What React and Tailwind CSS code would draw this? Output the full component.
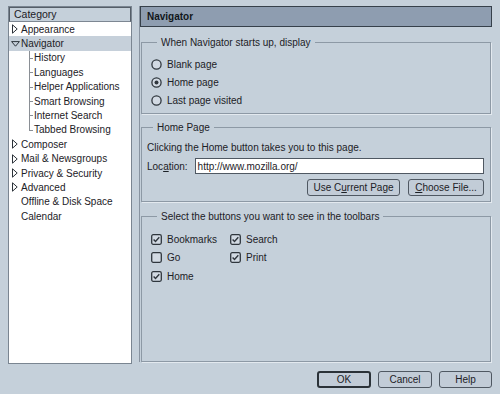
import React from "react";

const RightArrow = () => (
  <svg width="6" height="10" viewBox="0 0 6 10" className="shrink-0">
    <path d="M0.5 0.8 L5.2 5 L0.5 9.2 Z" fill="none" stroke="#2c333a" strokeWidth="1" />
  </svg>
);

const DownArrow = () => (
  <svg width="9" height="6" viewBox="0 0 9 6" className="shrink-0">
    <path d="M0.6 0.6 L8.4 0.6 L4.5 5.2 Z" fill="none" stroke="#2c333a" strokeWidth="1" />
  </svg>
);

const Radio = ({ checked }) => (
  <svg width="11" height="11" viewBox="0 0 11 11" className="shrink-0">
    <circle cx="5.5" cy="5.5" r="4.6" fill="#d2dae3" stroke="#2f363d" strokeWidth="1.3" />
    {checked && <circle cx="5.5" cy="5.5" r="2" fill="#2f363d" />}
  </svg>
);

const Check = ({ checked }) => (
  <svg width="11" height="11" viewBox="0 0 11 11" className="shrink-0">
    <rect x="0.7" y="0.7" width="9.6" height="9.6" rx="1.5" fill="#d2dae3" stroke="#2f363d" strokeWidth="1.3" />
    {checked && (
      <path d="M2.6 5.4 L4.5 7.4 L8.3 3.2" fill="none" stroke="#2f363d" strokeWidth="1.4" />
    )}
  </svg>
);

const Btn = ({ children, w, strong }) => (
  <div
    className={`h-[17px] ${w} flex items-center justify-center rounded-[3px] bg-[#c2ccd7] ${
      strong ? "border-2 border-[#2b3238]" : "border border-[#4f5862]"
    }`}
  >
    {children}
  </div>
);

const Group = ({ title, className, children }) => (
  <fieldset
    className={`border border-[#8d99a5] shadow-[1px_1px_0_#e3e9ef] ml-[1px] mr-[3px] ${className}`}
  >
    <legend className="ml-[6px] px-[4px] leading-[13px]">{title}</legend>
    {children}
  </fieldset>
);

const topItems = [
  { label: "Appearance", arrow: "right" },
  { label: "Navigator", arrow: "down", selected: true },
];
const children = [
  "History",
  "Languages",
  "Helper Applications",
  "Smart Browsing",
  "Internet Search",
  "Tabbed Browsing",
];
const bottomItems = [
  { label: "Composer", arrow: "right" },
  { label: "Mail & Newsgroups", arrow: "right" },
  { label: "Privacy & Security", arrow: "right" },
  { label: "Advanced", arrow: "right" },
  { label: "Offline & Disk Space" },
  { label: "Calendar" },
];

const TopRow = ({ item }) => (
  <div
    className={`h-[14.4px] flex items-center ${item.selected ? "bg-[#c6d0da]" : ""} ${
      item.arrow === "down" ? "pl-[2px] gap-[1px]" : "pl-[3px] gap-[3px]"
    }`}
  >
    {item.arrow === "right" && <RightArrow />}
    {item.arrow === "down" && <DownArrow />}
    {!item.arrow && <span className="w-[6px]" />}
    <span>{item.label}</span>
  </div>
);

const App = () => {
  return (
    <div className="w-[500px] h-[394px] bg-[#c5d0da] flex flex-col font-['Liberation_Sans',Arial,sans-serif] text-[10px] text-[#1c2126] overflow-hidden">
      <div className="flex pt-[6px] pl-[8px] gap-[7px]">
        {/* category tree */}
        <div className="w-[124px] h-[358px] bg-white border border-[#7a8591] flex flex-col">
          <div className="h-[15px] bg-[#c5d0da] border border-[#555e68] border-b-[#7d8792] flex items-center pl-[4px] text-[10.5px]">
            Category
          </div>
          {topItems.map((item) => (
            <TopRow key={item.label} item={item} />
          ))}
          {children.map((c, i) => (
            <div key={c} className="h-[14.4px] flex items-center relative pl-[25px]">
              <span
                className={`absolute left-[20px] top-0 w-px bg-[#8a8f95] ${
                  i === children.length - 1 ? "h-[7px]" : "h-full"
                }`}
              />
              <span className="absolute left-[20px] top-[7px] w-[4px] h-px bg-[#8a8f95]" />
              <span>{c}</span>
            </div>
          ))}
          {bottomItems.map((item) => (
            <TopRow key={item.label} item={item} />
          ))}
        </div>

        {/* right panel */}
        <div className="w-[355px] h-[356px] flex flex-col border-l border-[#8893a0]">
          <div className="h-[21px] mr-[2px] bg-[#8e9db0] border border-[#36404a] flex items-center pl-[6px] font-bold text-[10px] text-[#11161b]">
            Navigator
          </div>

          <Group title="When Navigator starts up, display" className="mt-[9px] pl-[9px] pt-[6px] pb-[4px]">
            {[
              ["Blank page", false],
              ["Home page", true],
              ["Last page visited", false],
            ].map(([label, on]) => (
              <div key={label} className="h-[18px] flex items-center gap-[5px]">
                <Radio checked={on} />
                <span>{label}</span>
              </div>
            ))}
          </Group>

          <Group title="Home Page" className="mt-[7px] pl-[5px] pr-[6px] pt-[7px] pb-[5px]">
            <div className="leading-[13px]">Clicking the Home button takes you to this page.</div>
            <div className="flex items-center mt-[4px] gap-[7px]">
              <span>
                Loc<span className="underline">a</span>tion:
              </span>
              <div className="flex-1 h-[16px] bg-white border border-[#4f5862] flex items-center pl-[2px]">
                http://www.mozilla.org/
              </div>
            </div>
            <div className="flex justify-end gap-[8px] mt-[5px]">
              <Btn w="w-[93px]">
                Use C<span className="underline">u</span>rrent Page
              </Btn>
              <Btn w="w-[76px]">
                <span className="underline">C</span>hoose File...
              </Btn>
            </div>
          </Group>

          <Group
            title="Select the buttons you want to see in the toolbars"
            className="mt-[8px] flex-1 pl-[9px] pt-[7px]"
          >
            <div className="grid grid-cols-[79px_80px] auto-rows-[18.5px]">
              {[
                ["Bookmarks", true],
                ["Search", true],
                ["Go", false],
                ["Print", true],
                ["Home", true],
              ].map(([label, on]) => (
                <div key={label} className="flex items-center gap-[5px]">
                  <Check checked={on} />
                  <span>{label}</span>
                </div>
              ))}
            </div>
          </Group>
        </div>
      </div>

      <div className="flex justify-end gap-[7px] pr-[8px] mt-[7px]">
        <Btn w="w-[54px]" strong>
          OK
        </Btn>
        <Btn w="w-[54px]">Cancel</Btn>
        <Btn w="w-[53px]">Help</Btn>
      </div>
    </div>
  );
};

export default App;
